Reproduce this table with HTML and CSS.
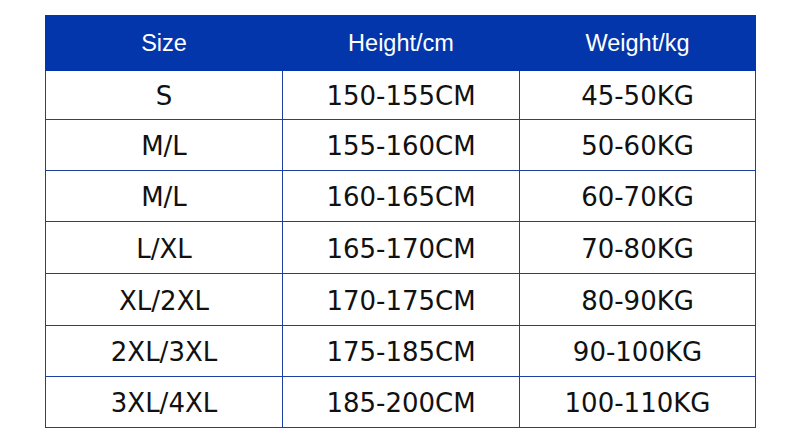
FILE: index.html
```html
<!DOCTYPE html>
<html>
<head>
<meta charset="utf-8">
<link rel="stylesheet" href="styles.css">
</head>
<body>
<div class="wrap">
<table class="sizes">
<thead>
<tr><th>Size</th><th>Height/cm</th><th>Weight/kg</th></tr>
</thead>
<tbody>
<tr class="r1"><td>S</td><td>150-155CM</td><td>45-50KG</td></tr>
<tr><td>M/L</td><td>155-160CM</td><td>50-60KG</td></tr>
<tr><td>M/L</td><td>160-165CM</td><td>60-70KG</td></tr>
<tr class="tall"><td>L/XL</td><td>165-170CM</td><td>70-80KG</td></tr>
<tr class="tall"><td>XL/2XL</td><td>170-175CM</td><td>80-90KG</td></tr>
<tr><td>2XL/3XL</td><td>175-185CM</td><td>90-100KG</td></tr>
<tr><td>3XL/4XL</td><td>185-200CM</td><td>100-110KG</td></tr>
</tbody>
</table>
</div>
</body>
</html>
```
FILE: styles.css
```css
html, body {
  margin: 0;
  padding: 0;
  background: #ffffff;
}
.wrap {
  padding: 15px 45px 0 45px;
}
.sizes {
  width: 711px;
  border-collapse: collapse;
  table-layout: fixed;
}
.sizes th, .sizes td {
  text-align: center;
  vertical-align: middle;
  padding: 0;
}
.sizes th {
  height: 54px;
  background: #0436ab;
  color: #ffffff;
  font-family: "Liberation Sans", Arial, sans-serif;
  font-weight: normal;
  font-size: 23.5px;
  border: 1px solid #0436ab;
}
.sizes th:nth-child(1), .sizes td:nth-child(1) { width: 236px; }
.sizes th:nth-child(2), .sizes td:nth-child(2) { width: 236px; }
.sizes td {
  height: 48px;
  padding-top: 2px;
  border: 1px solid #1d40a0;
  color: #111111;
  font-family: "DejaVu Sans", Verdana, sans-serif;
  font-size: 26px;
  letter-spacing: 0;
}
.sizes .r1 td {
  height: 46px;
}
.sizes .tall td {
  height: 49px;
}
```
